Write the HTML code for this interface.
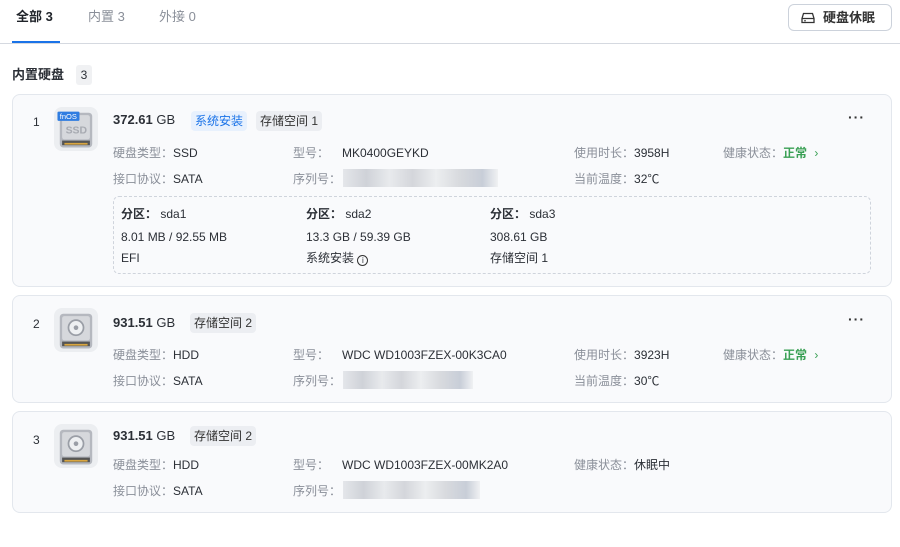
<!DOCTYPE html>
<html><head><meta charset="utf-8"><style>
*{margin:0;padding:0;box-sizing:border-box}
body{width:900px;height:547px;background:#fff;font-family:"Liberation Sans","Noto Sans CJK SC",sans-serif;font-size:12px;color:#2b2f36;position:relative;overflow:hidden}
.a{position:absolute;white-space:nowrap;line-height:16px}
.tab{font-size:13px;top:9px;color:#8a8f99}
.card{position:absolute;left:12px;width:880px;background:#f9fafc;border:1px solid #e3e7ed;border-radius:8px}
.lb{color:#8a8f99}
.tag{position:absolute;height:20px;line-height:20px;padding:0 4px;border-radius:4px;background:#eceef2;color:#333;font-size:12px;white-space:nowrap}
.blur{position:absolute;height:18px;background:linear-gradient(90deg,#e4e6ea,#cfd2d8 15%,#e8eaed 30%,#d4d6db 45%,#eceef0 60%,#d8dade 75%,#c8ced8 90%,#f0f1f3)}
.icon{position:absolute;left:41px;width:44px;height:44px;border-radius:8px;background:#eceef1}
.dots{position:absolute;right:26px;font-size:14px;letter-spacing:1px;color:#333;font-weight:bold}
</style></head><body>
<div class="a tab" style="left:16px;color:#1f2329;font-weight:bold">全部 3</div>
<div class="a tab" style="left:88px">内置 3</div>
<div class="a tab" style="left:159px">外接 0</div>
<div style="position:absolute;left:12px;top:41px;width:48px;height:2px;background:#1a73e8"></div>
<div style="position:absolute;left:0;top:43px;width:900px;height:1px;background:#d5d9e0"></div>
<div style="position:absolute;left:788px;top:4px;width:104px;height:27px;border:1px solid #ccd2db;border-radius:6px"></div>
<svg style="position:absolute;left:801px;top:12px" width="14" height="12" viewBox="0 0 14 12"><path d="M2.5 1.5h9l1.5 5v4h-12v-4z M1 6.5h12" fill="none" stroke="#333" stroke-width="1.3"/><circle cx="4" cy="8.7" r=".8" fill="#333"/></svg>
<div class="a" style="left:823px;top:10px;font-size:13px;font-weight:bold;color:#333">硬盘休眠</div>
<div class="a" style="left:12px;top:67px;font-size:13px;font-weight:bold">内置硬盘</div>
<div style="position:absolute;left:76px;top:65px;width:16px;height:20px;background:#f0f1f3;border-radius:3px;text-align:center;line-height:20px;font-size:12px">3</div>

<!-- card 1 -->
<div class="card" style="top:94px;height:193px">
<div class="a" style="left:20px;top:19px">1</div>
<div class="icon" style="top:12px"><svg width="44" height="44" viewBox="3 2 38 38"><rect x="8" y="7" width="28" height="30" rx="3" fill="#b5b8bf"/><rect x="10" y="9" width="24" height="21" rx="2" fill="#d6d8dc"/><text x="13" y="25" font-size="9" font-weight="bold" fill="#a7aab1" font-family="Liberation Sans">SSD</text><rect x="10" y="31" width="24" height="4" fill="#555"/><rect x="12" y="33" width="20" height="1.5" fill="#d9a640"/><rect x="6" y="6" width="19" height="8" rx="1" fill="#2f7de1"/><text x="8" y="12.5" font-size="6.5" fill="#fff" font-family="Liberation Sans">fnOS</text></svg></div>
<div class="a" style="left:100px;top:17px;font-size:13px"><b>372.61</b> GB</div>
<div class="tag" style="left:178px;top:16px;background:#e8f1fd;color:#1a73e8">系统安装</div>
<div class="tag" style="left:243px;top:16px">存储空间 1</div>
<div class="dots" style="top:14px">···</div>
<div class="a" style="left:100px;top:50px"><span class="lb">硬盘类型：</span>SSD</div>
<div class="a" style="left:280px;top:50px"><span class="lb">型号：</span></div>
<div class="a" style="left:329px;top:50px">MK0400GEYKD</div>
<div class="a" style="left:561px;top:50px"><span class="lb">使用时长：</span>3958H</div>
<div class="a" style="left:710px;top:50px"><span class="lb">健康状态：</span><b style="color:#3aa055">正常</b> <span style="color:#3aa055;margin-left:4px">›</span></div>
<div class="a" style="left:100px;top:76px"><span class="lb">接口协议：</span>SATA</div>
<div class="a" style="left:280px;top:76px"><span class="lb">序列号：</span></div>
<div class="blur" style="left:330px;top:74px;width:155px"></div>
<div class="a" style="left:561px;top:76px"><span class="lb">当前温度：</span>32℃</div>
<div style="position:absolute;left:100px;top:101px;width:758px;height:78px;border:1px dashed #cfd4dc;border-radius:6px"></div>
<div class="a" style="left:108px;top:111px"><b>分区：</b> sda1</div>
<div class="a" style="left:293px;top:111px"><b>分区：</b> sda2</div>
<div class="a" style="left:477px;top:111px"><b>分区：</b> sda3</div>
<div class="a" style="left:108px;top:134px">8.01 MB / 92.55 MB</div>
<div class="a" style="left:293px;top:134px">13.3 GB / 59.39 GB</div>
<div class="a" style="left:477px;top:134px">308.61 GB</div>
<div class="a" style="left:108px;top:155px">EFI</div>
<div class="a" style="left:293px;top:155px">系统安装 <span style="display:inline-block;width:11px;height:11px;border:1px solid #333;border-radius:50%;font-size:8px;line-height:9px;text-align:center;vertical-align:-1px">i</span></div>
<div class="a" style="left:477px;top:155px">存储空间 1</div>
</div>

<!-- card 2 -->
<div class="card" style="top:295px;height:108px">
<div class="a" style="left:20px;top:20px">2</div>
<div class="icon" style="top:12px"><svg width="44" height="44" viewBox="3 2 38 38"><rect x="8" y="7" width="28" height="30" rx="3" fill="#b5b8bf"/><rect x="10" y="9" width="24" height="21" rx="2" fill="#d6d8dc"/><circle cx="22" cy="19" r="6.5" fill="#eef0f2" stroke="#9a9ea6" stroke-width="1.5"/><circle cx="22" cy="19" r="2" fill="#9a9ea6"/><rect x="10" y="31" width="24" height="4" fill="#555"/><rect x="12" y="33" width="20" height="1.5" fill="#d9a640"/></svg></div>
<div class="a" style="left:100px;top:19px;font-size:13px"><b>931.51</b> GB</div>
<div class="tag" style="left:177px;top:17px">存储空间 2</div>
<div class="dots" style="top:15px">···</div>
<div class="a" style="left:100px;top:51px"><span class="lb">硬盘类型：</span>HDD</div>
<div class="a" style="left:280px;top:51px"><span class="lb">型号：</span></div>
<div class="a" style="left:329px;top:51px">WDC WD1003FZEX-00K3CA0</div>
<div class="a" style="left:561px;top:51px"><span class="lb">使用时长：</span>3923H</div>
<div class="a" style="left:710px;top:51px"><span class="lb">健康状态：</span><b style="color:#3aa055">正常</b> <span style="color:#3aa055;margin-left:4px">›</span></div>
<div class="a" style="left:100px;top:77px"><span class="lb">接口协议：</span>SATA</div>
<div class="a" style="left:280px;top:77px"><span class="lb">序列号：</span></div>
<div class="blur" style="left:330px;top:75px;width:130px"></div>
<div class="a" style="left:561px;top:77px"><span class="lb">当前温度：</span>30℃</div>
</div>

<!-- card 3 -->
<div class="card" style="top:411px;height:102px">
<div class="a" style="left:20px;top:20px">3</div>
<div class="icon" style="top:12px"><svg width="44" height="44" viewBox="3 2 38 38"><rect x="8" y="7" width="28" height="30" rx="3" fill="#b5b8bf"/><rect x="10" y="9" width="24" height="21" rx="2" fill="#d6d8dc"/><circle cx="22" cy="19" r="6.5" fill="#eef0f2" stroke="#9a9ea6" stroke-width="1.5"/><circle cx="22" cy="19" r="2" fill="#9a9ea6"/><rect x="10" y="31" width="24" height="4" fill="#555"/><rect x="12" y="33" width="20" height="1.5" fill="#d9a640"/></svg></div>
<div class="a" style="left:100px;top:16px;font-size:13px"><b>931.51</b> GB</div>
<div class="tag" style="left:177px;top:14px">存储空间 2</div>
<div class="a" style="left:100px;top:45px"><span class="lb">硬盘类型：</span>HDD</div>
<div class="a" style="left:280px;top:45px"><span class="lb">型号：</span></div>
<div class="a" style="left:329px;top:45px">WDC WD1003FZEX-00MK2A0</div>
<div class="a" style="left:561px;top:45px"><span class="lb">健康状态：</span>休眠中</div>
<div class="a" style="left:100px;top:71px"><span class="lb">接口协议：</span>SATA</div>
<div class="a" style="left:280px;top:71px"><span class="lb">序列号：</span></div>
<div class="blur" style="left:330px;top:69px;width:137px"></div>
</div>
</body></html>
